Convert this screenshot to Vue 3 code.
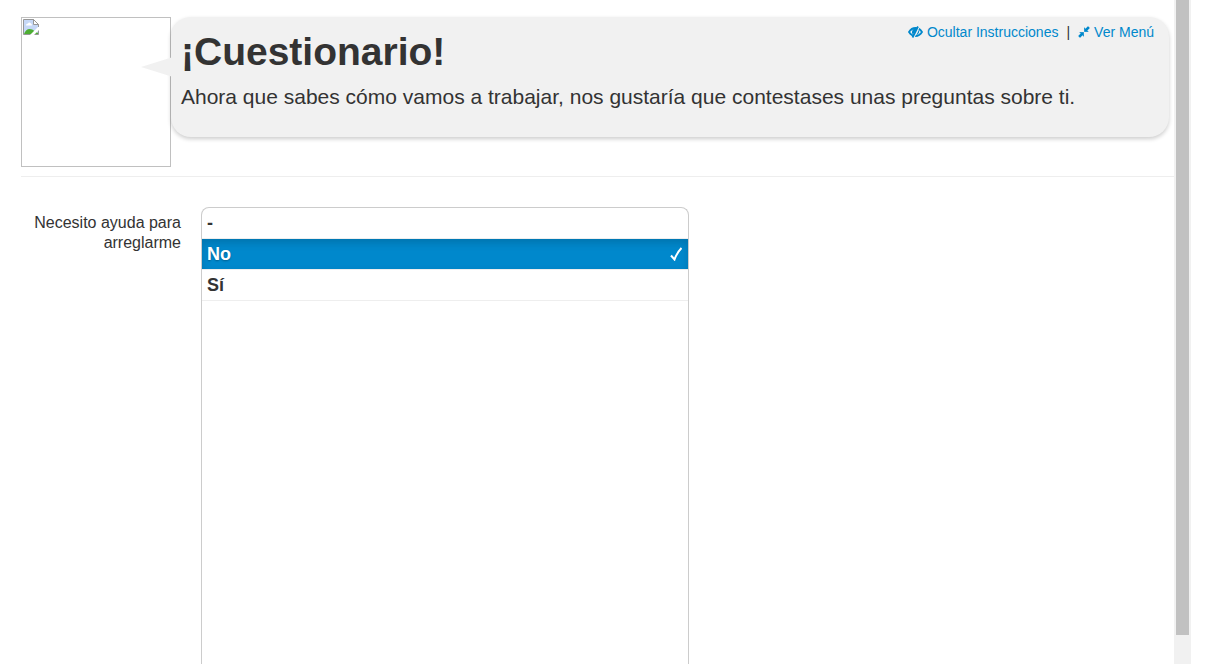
<script setup>
import { ref } from 'vue'

const options = ['-', 'No', 'Sí']
const selected = ref('No')
</script>

<template>
  <div class="viewport">
    <main class="content">
      <header class="intro">
        <div class="avatar" role="img" aria-label="Imagen no disponible">
          <svg class="broken" viewBox="0 0 16 16" width="16" height="16" aria-hidden="true">
            <path d="M.5.5h10l5 5v10H.5z" fill="#c6d8f7" stroke="#979797" />
            <path d="M10.500 .5v5h5z" fill="#fff" stroke="#979797" />
            <path d="M3 6.500q0-2 2-2 1-2 3 0 1 .5 1 2z" fill="#fff" />
            <path d="M1 15q2-5 5.500-5 3 0 5 2l3.500 2v1z" fill="#4eae33" />
            <path d="M7 16 15 8h1v3l-5 5z" fill="#fff" />
          </svg>
        </div>
        <section class="bubble">
          <svg class="tail" viewBox="0 0 32 20" width="32" height="20" aria-hidden="true">
            <path d="M0 10 32 0v20z" fill="#f1f1f1" />
          </svg>
          <nav class="actions">
            <a href="#instrucciones">
              <svg viewBox="0 0 15 12" width="15" height="12" aria-hidden="true">
                <path d="M1 6Q3.500 2 7.500 2T14 6Q11.500 10 7.500 10T1 6z" fill="none" stroke="currentColor" stroke-width="1.800" />
                <path d="M7.500 2.500a3.500 3.500 0 0 0-2.500 6L9 2.500z" fill="currentColor" />
                <path d="M11 3.500q1 3-2 5.500l-1 1z" fill="currentColor" />
                <path d="M11 .5 5.500 11.500" stroke="#f1f1f1" stroke-width="2" />
                <path d="M10 .5 4.500 11.500" stroke="currentColor" stroke-width="1.800" />
              </svg>
              Ocultar Instrucciones</a>
            <span class="divider">|</span>
            <a href="#menu">
              <svg viewBox="0 0 12 12" width="12" height="12" aria-hidden="true">
                <path d="M6 6V1l1.500 1.500L10 0l2 2-2.500 2.500L11 6zM6 6v5L4.500 9.500 2 12 0 10l2.500-2.500L1 6z" fill="currentColor" stroke="#f1f1f1" stroke-width=".3" />
              </svg>
              Ver Menú</a>
          </nav>
          <h1>¡Cuestionario!</h1>
          <p>Ahora que sabes cómo vamos a trabajar, nos gustaría que contestases unas preguntas sobre ti.</p>
        </section>
      </header>

      <form class="question" @submit.prevent>
        <div id="ayuda" class="caption">Necesito ayuda para arreglarme</div>
        <div class="choices" role="radiogroup" aria-labelledby="ayuda">
          <label v-for="option in options" :key="option" class="choice" :class="{ active: selected === option }">
            <input v-model="selected" type="radio" name="ayuda" :value="option" />
            <span>{{ option }}</span>
            <svg v-if="selected === option" class="check" viewBox="0 0 12 14" width="12" height="14" aria-hidden="true">
              <path d="M1 8.500 4.500 12.500Q7 5.500 11.500 1" fill="none" stroke="#fff" stroke-width="2" />
            </svg>
          </label>
        </div>
      </form>
    </main>
    <div class="scrollbar" aria-hidden="true"><div class="thumb"></div></div>
  </div>
</template>

<style>
body {
  margin: 0;
  background: #fff;
}
</style>

<style scoped>
.viewport {
  display: flex;
  height: 100vh;
  padding-right: 32px;
  overflow: hidden;
  color: #333;
  font: 16px/20px "Liberation Sans", Arial, sans-serif;
}
.content {
  display: flex;
  flex: 1;
  flex-direction: column;
  min-width: 0;
  padding: 17px 0 0 21px;
}
.intro {
  display: flex;
  align-items: flex-start;
  padding: 0 5px 9px 0;
  border-bottom: 1px solid #eee;
}
.avatar {
  box-sizing: border-box;
  flex: none;
  width: 150px;
  height: 150px;
  padding: 1px;
  border: 1px solid #c0c0c0;
}
.broken {
  display: block;
}
.bubble {
  position: relative;
  box-sizing: border-box;
  flex: 1;
  min-height: 120px;
  padding: 15px 10px 20px;
  border-radius: 20px;
  background: #f1f1f1;
  box-shadow: 0 2px 4px rgba(0, 0, 0, 0.2);
}
.tail {
  position: absolute;
  top: 40px;
  left: -30px;
}
.actions {
  position: absolute;
  top: 5px;
  right: 15px;
  display: flex;
  gap: 8px;
  font-size: 14px;
}
.actions a {
  display: flex;
  align-items: center;
  gap: 4px;
  color: #08c;
  text-decoration: none;
}
h1 {
  margin: 0;
  font-size: 39px;
  line-height: 40px;
}
p {
  margin: 10px 0 0;
  font-size: 21px;
  line-height: 30px;
}
.question {
  display: flex;
  flex: 1;
  gap: 20px;
  align-items: stretch;
  padding-top: 30px;
}
.caption {
  width: 160px;
  padding-top: 6px;
  text-align: right;
}
.choices {
  box-sizing: border-box;
  width: 488px;
  border: 1px solid #ccc;
  border-bottom: 0;
  border-radius: 8px 8px 0 0;
  overflow: hidden;
}
.choice {
  display: flex;
  align-items: center;
  justify-content: space-between;
  height: 30px;
  padding: 0 6px 0 5px;
  border-bottom: 1px solid #eee;
  font-size: 18px;
  font-weight: bold;
}
.choice input {
  position: absolute;
  margin: 0;
  opacity: 0;
}
.choice.active {
  background: #08c;
  background-clip: padding-box;
  box-shadow: inset 0 4px 8px rgba(0, 0, 0, 0.15);
  color: #fff;
  text-shadow: 0 1px 2px rgba(0, 0, 0, 0.3);
}
.scrollbar {
  box-sizing: border-box;
  width: 17px;
  padding: 0 2px;
  background: #f1f1f1;
}
.thumb {
  width: 100%;
  height: 95.6%;
  background: #c1c1c1;
}
</style>
